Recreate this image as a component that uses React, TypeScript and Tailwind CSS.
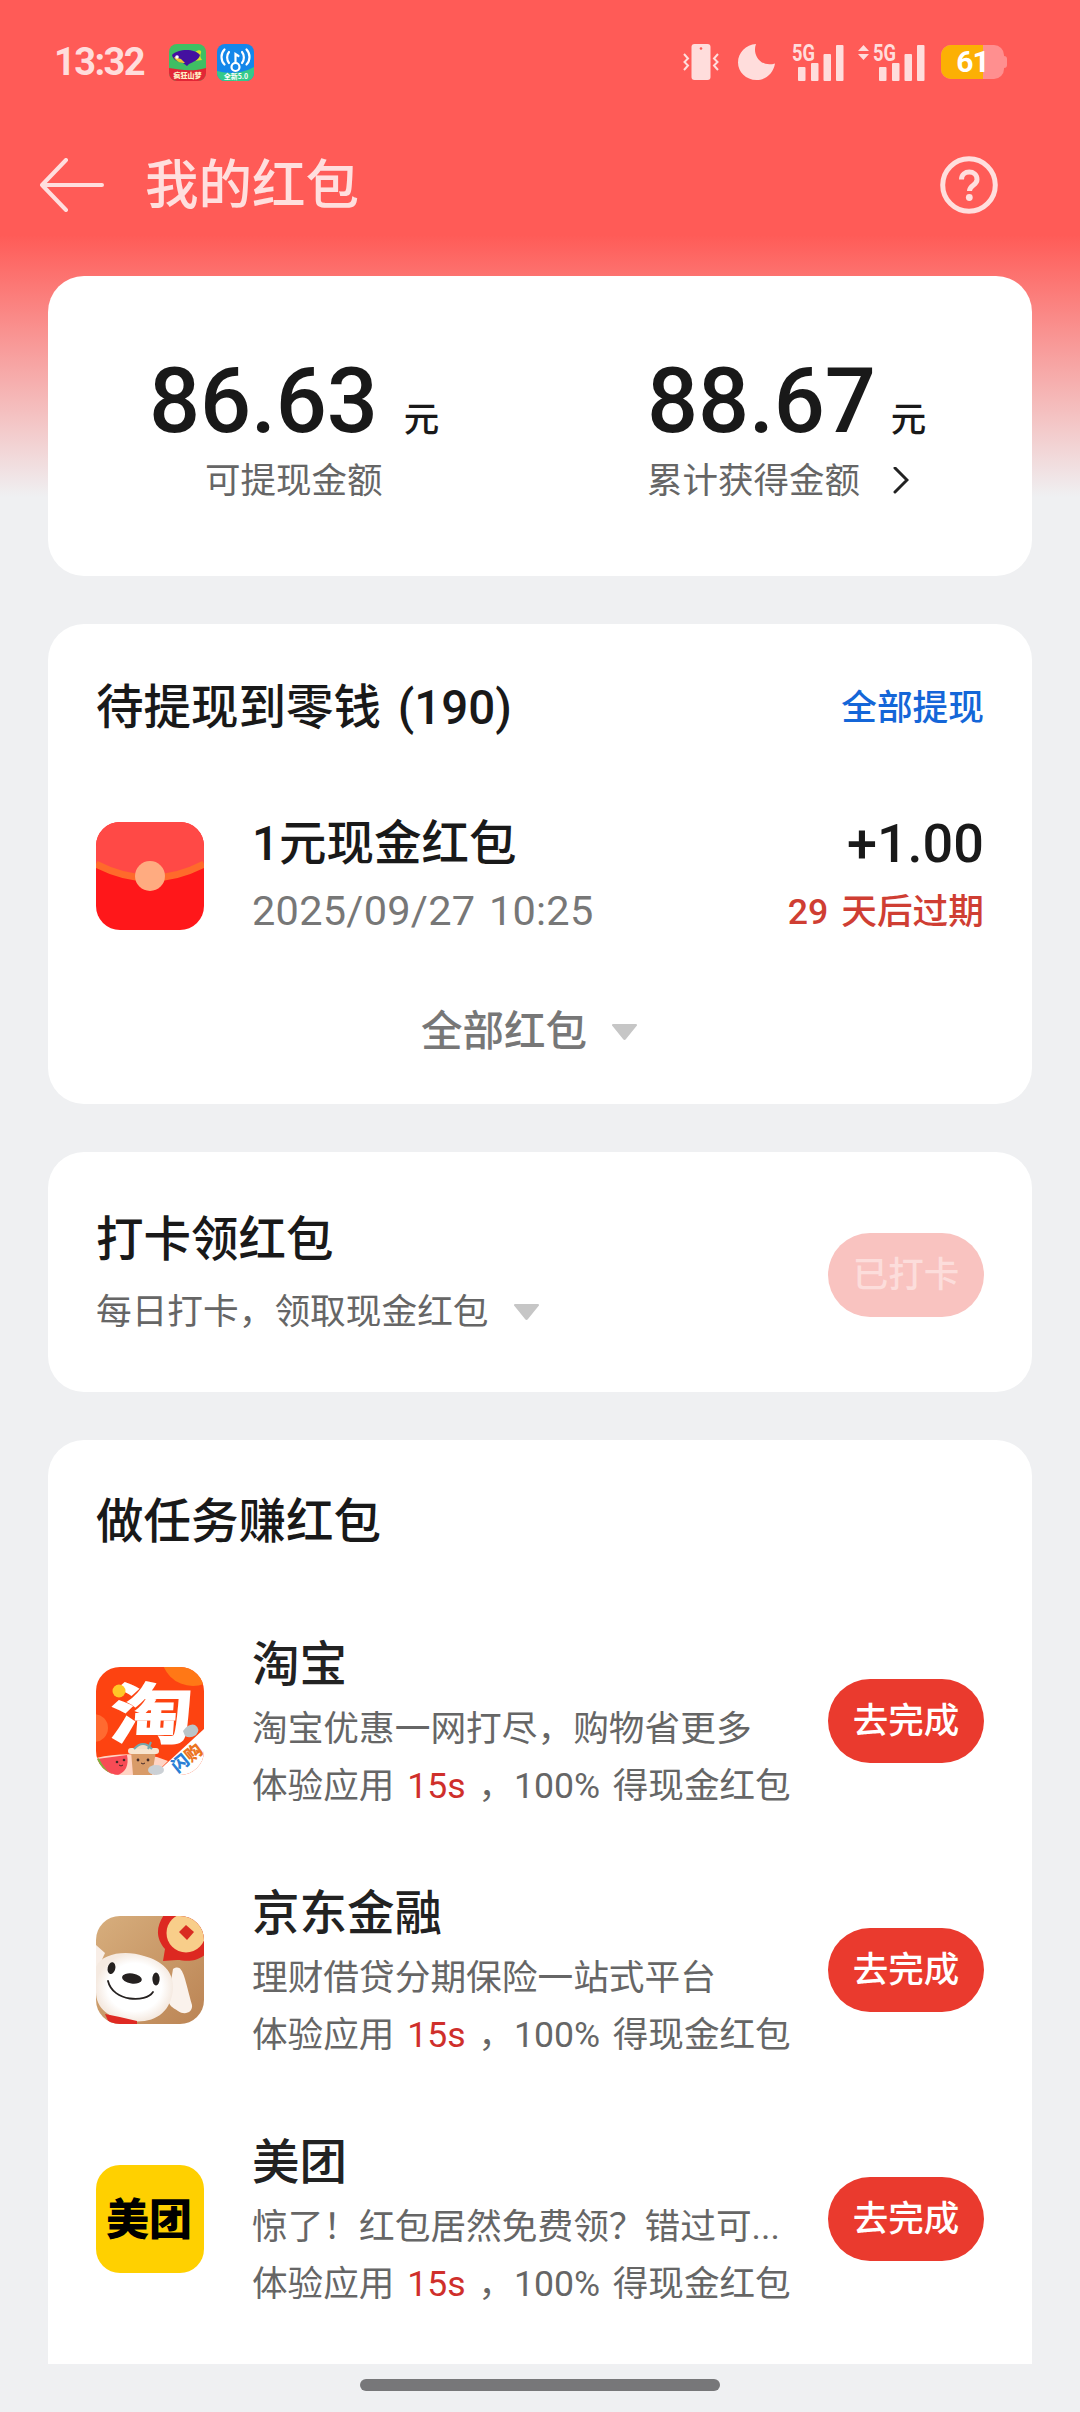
import React from "react";

const TEXT_FONT = "font-[Roboto,'Noto_Sans_CJK_SC',sans-serif]";

const tasks = [
  { name: "淘宝", desc: "淘宝优惠一网打尽，购物省更多", icon: <TaobaoIcon /> },
  { name: "京东金融", desc: "理财借贷分期保险一站式平台", icon: <JdIcon /> },
  { name: "美团", desc: "惊了！红包居然免费领？错过可...", icon: <MeituanIcon /> },
];

function Signal() {
  return (
    <svg className="h-[38px] w-[52px] overflow-visible" viewBox="0 0 52 38" fill="#ffdddc">
      <text x="0" y="17.500" fontSize="23" fontWeight="700" fontFamily="Roboto" textLength="23" lengthAdjust="spacingAndGlyphs">5G</text>
      <rect x="6" y="24" width="7.5" height="14" rx="1" />
      <rect x="19" y="20" width="7.5" height="18" rx="1" />
      <rect x="31.5" y="11" width="7.5" height="27" rx="1" />
      <rect x="44" y="2" width="7.5" height="36" rx="1" />
    </svg>
  );
}

function StatusBar() {
  return (
    <div className="flex h-[124px] items-center pl-[54px] pr-[73px]">
      <span className="w-[90px] text-[38px] leading-none font-bold tracking-[-1.6px] text-[#ffdddc]">13:32</span>
      <svg className="ml-[25px] size-[37px]" viewBox="0 0 37 37">
        <clipPath id="appA"><rect width="37" height="37" rx="8" /></clipPath>
        <g clipPath="url(#appA)">
          <rect width="37" height="37" fill="#3fbf63" />
          <path d="M26 8c4-3 7-2 6 1-1 2-1 4 1 7l-8 1z" fill="#d8df2c" />
          <path d="M3 11C9 5 25 4 31 11c-1 5-7 7-11 9l-2 2-4-3C9 18 4 16 3 11z" fill="#4410a0" />
          <path d="M5 13c2 5 7 6 11 6l-4-4z" fill="#e9c92e" />
          <circle cx="8" cy="13" r="1.8" fill="#fff" />
          <path d="M0 24c12 2 24 4 37 0v13H0z" fill="#e32636" />
          <text x="18.500" y="34" fontSize="7" fontWeight="900" fill="#fff3c8" textAnchor="middle" fontFamily="Noto Sans CJK SC">疯狂山梦</text>
        </g>
      </svg>
      <svg className="ml-[11px] size-[37px]" viewBox="0 0 37 37">
        <clipPath id="appB"><rect width="37" height="37" rx="8" /></clipPath>
        <g clipPath="url(#appB)">
          <rect width="37" height="37" fill="#1487ea" />
          <path d="M0 27c12 3 25 3 37-4v14H0z" fill="#35c98a" />
          <g fill="none" stroke="#fff" strokeWidth="2.200" strokeLinecap="round">
            <circle cx="18.500" cy="23" r="4" />
            <path d="M18.500 19V10l3 2M12 8c-2.500 3-2.500 8 0 11M7.500 5.500c-4 4-4 11 0 15M25 8c2.500 3 2.500 8 0 11M29.500 5.500c4 4 4 11 0 15" />
          </g>
          <text x="19" y="34.500" fontSize="7" fontWeight="700" fill="#fff" textAnchor="middle" fontFamily="Noto Sans CJK SC">全新5.0</text>
        </g>
      </svg>
      <div className="ml-auto flex items-center">
        <svg className="h-9 w-9" viewBox="0 0 36 36" fill="#ffdddc">
          <rect x="8.500" width="19" height="36" rx="3" />
          <circle cx="18" cy="4.500" r="1.300" fill="#ff5b57" />
          <path d="M1 10l4 4.500-3.500 3.500L5 21.500 1 26M35 10l-4 4.500 3.500 3.500-3.500 3.500L35 26" fill="none" stroke="#ffdddc" strokeWidth="2" />
        </svg>
        <svg className="ml-[19px] h-9 w-[37px]" viewBox="0 0 37 36" fill="#ffdddc">
          <path d="M18 0C14 10 22 24 37 19.500C35.500 29 28 36 18.500 36C8 36 0 28 0 18.500C0 8.500 8 .5 18 0Z" />
        </svg>
        <span className="ml-[17px]"><Signal /></span>
        <svg className="mb-5 ml-[14px] h-[15px] w-[11px]" viewBox="0 0 11 15" fill="#ffdddc">
          <path d="M5.500 0L11 6H0zM5.500 15L0 9h11z" />
        </svg>
        <span className="ml-1"><Signal /></span>
        <div className="relative ml-4 flex h-[34px] w-[63px] items-center justify-center overflow-hidden rounded-[10px] bg-[#ff8f8f]">
          <div className="absolute inset-y-0 left-0 w-[42px] bg-[#fcb004]" />
          <span className="relative text-[30px] leading-none font-bold tracking-[-1px] text-white">61</span>
        </div>
        <div className="h-3 w-[3px] rounded-r bg-[#ff8f8f]" />
      </div>
    </div>
  );
}

function Header() {
  return (
    <div className="flex h-[121px] items-center pl-10 pr-[82px]">
      <svg className="h-[54px] w-16" viewBox="0 0 64 54" fill="none" stroke="#ffdfde" strokeWidth="4" strokeLinecap="round" strokeLinejoin="round">
        <path d="M26 2L2 27l24 25M2 27h60" />
      </svg>
      <h1 className="ml-[41px] pt-0.5 text-[53.5px] leading-[60px] font-medium text-[#ffdfde]">我的红包</h1>
      <svg className="ml-auto size-[58px]" viewBox="0 0 58 58" fill="none" stroke="#ffdfde" strokeWidth="5">
        <circle cx="29" cy="29" r="26.300" />
        <path d="M21.500 23.500c0-10 15.500-10 15.500 0 0 6-7.500 5.500-7.500 11.500" />
        <circle cx="29.300" cy="41.500" r="3.400" fill="#ffdfde" stroke="none" />
      </svg>
    </div>
  );
}

function Down() {
  return (
    <svg className="h-4 w-[25px]" viewBox="0 0 25 16" fill="#c6c6c6">
      <path d="M1.500 0h22c1.500 0 2 1 1 2L14 15c-1 1.300-2 1.300-3 0L.5 2C-.5 1 0 0 1.500 0z" />
    </svg>
  );
}

function EnvelopeIcon() {
  return (
    <svg className="size-[108px]" viewBox="0 0 108 108">
      <clipPath id="env"><rect width="108" height="108" rx="24" /></clipPath>
      <g clipPath="url(#env)">
        <rect width="108" height="108" fill="#ff171a" />
        <path d="M0 0h108v42Q54 72 0 42z" fill="#ff4946" />
        <path d="M0 42Q54 70 108 42" fill="none" stroke="#ff6a2b" strokeWidth="7" />
        <circle cx="54" cy="54" r="15" fill="#ffab80" />
      </g>
    </svg>
  );
}

function TaobaoIcon() {
  return (
    <svg className="size-[108px]" viewBox="0 0 108 108">
      <clipPath id="tb"><rect width="108" height="108" rx="24" /></clipPath>
      <g clipPath="url(#tb)">
        <rect width="108" height="108" fill="#fd4311" />
        <circle cx="97" cy="-13" r="32" fill="#ff7816" />
        <circle cx="-2" cy="61" r="14" fill="#ff6a30" />
        <text fontSize="66" fontWeight="700" fill="#fff" stroke="#fff" strokeWidth="1.500" textAnchor="middle" fontFamily="Noto Sans CJK SC" transform="translate(54 71) skewX(-4) scale(1.25 1)">淘</text>
        <circle cx="23" cy="24" r="6.500" fill="#ffc727" />
        <path d="M108 62L58 108h50z" fill="#fff" />
        <path d="M0 91Q30 84 61 90L72 94 58 108H0z" fill="#ffd4c4" />
        <path d="M1 92L31 88Q34 103 22 108H8z" fill="#f84b55" />
        <path d="M1 92Q7 105 17 110" fill="none" stroke="#79b83e" strokeWidth="4" />
        <path d="M35 84h25l-4 24H37z" fill="#d99b68" />
        <rect x="32" y="81" width="31" height="6" rx="3" fill="#f8e5d0" />
        <path d="M38 82q9-10 18 0M52 82l3-7" fill="#f5ddc7" stroke="#75a7ae" strokeWidth="2" />
        <g fill="#432a28">
          <circle cx="42" cy="93" r="1.400" /><circle cx="52" cy="93" r="1.400" />
          <circle cx="21" cy="95" r="1.300" /><circle cx="28" cy="93" r="1.300" />
        </g>
        <path d="M45 96q2 2 4 0M23 98q2 2 4 0" fill="none" stroke="#432a28" />
        <path d="M87 64q6-8 12-6 6 4 1 10-6 4-11 1z" fill="#bac5c9" />
        <ellipse cx="60" cy="103" rx="8" ry="5" fill="#cbd0d5" />
        <text x="91" y="97" fontSize="17" fontWeight="900" fill="#ec7422" textAnchor="middle" fontFamily="Noto Sans CJK SC" transform="rotate(-39 91 91)">
          <tspan fill="#2a7fd5">闪</tspan>购
        </text>
      </g>
    </svg>
  );
}

function JdIcon() {
  return (
    <svg className="size-[108px]" viewBox="0 0 108 108">
      <defs>
        <clipPath id="jd"><rect width="108" height="108" rx="24" /></clipPath>
        <linearGradient id="jdBg" x1="0" y1="0" x2="1" y2="1">
          <stop stopColor="#d7ae7d" />
          <stop offset="1" stopColor="#bb8454" />
        </linearGradient>
        <radialGradient id="jdFace">
          <stop offset=".7" stopColor="#fff" />
          <stop offset="1" stopColor="#f5eae1" />
        </radialGradient>
      </defs>
      <g clipPath="url(#jd)">
        <rect width="108" height="108" fill="url(#jdBg)" />
        <path d="M67 45l2-12C58 20 61 8 70-4h40v42C98 48 88 44 81 44z" fill="#dd2821" />
        <circle cx="90" cy="17" r="19.500" fill="#f8ce8a" />
        <path d="M90 9l8 7-7 8-8-8z" fill="#d92b22" />
        <path d="M0 29l9 8-9 20z" fill="#f8eee7" />
        <path d="M77 53c10-6 11 7 19 36 1 7-7 11-14 6-6-4-9-5-10-12z" fill="#faf2ec" />
        <path d="M0 51C6 37 30 34 48 40c18 5 30 15 29 33C75 97 58 108 34 105 13 103 0 92 0 76z" fill="url(#jdFace)" />
        <ellipse cx="15.500" cy="52" rx="3.800" ry="6" fill="#252120" transform="rotate(12 15 52)" />
        <ellipse cx="60" cy="63" rx="3.600" ry="6.500" fill="#252120" />
        <ellipse cx="36" cy="62.500" rx="10" ry="5" fill="#252120" transform="rotate(8 36 62)" />
        <path d="M12 65c5 21 38 22 45 11" fill="none" stroke="#252120" strokeWidth="1.800" strokeLinecap="round" />
        <path d="M9 98q16 3 32 7v4H14z" fill="#df2922" />
      </g>
    </svg>
  );
}

function MeituanIcon() {
  return (
    <div className="flex size-[108px] items-center justify-center rounded-3xl bg-[#ffd000] pb-[5px] pr-0.5">
      <span className="font-['Noto_Sans_CJK_SC',sans-serif] text-[43px] leading-[64px] font-black text-black">美团</span>
    </div>
  );
}

function Balance() {
  return (
    <section className="flex h-[300px] rounded-[36px] bg-white pt-[78px] text-[#191919]">
      <div className="w-[492px] pl-[101px]">
        <div className="flex items-baseline font-medium">
          <span className="text-[90px] leading-[96px] tracking-[-0.2px]">86.63</span>
          <span className="ml-[26px] text-[35.5px] leading-[48px]">元</span>
        </div>
        <p className="mt-[11px] pl-[56px] text-[35.500px] leading-[40px] text-[#666]">可提现金额</p>
      </div>
      <div className="pl-[107px]">
        <div className="flex items-baseline font-medium">
          <span className="text-[90px] leading-[96px] tracking-[-0.2px]">88.67</span>
          <span className="ml-[15px] text-[35.5px] leading-[48px]">元</span>
        </div>
        <div className="mt-[11px] flex items-center">
          <p className="text-[35.5px] leading-[40px] text-[#666]">累计获得金额</p>
          <svg className="ml-[33px] h-7 w-4" viewBox="0 0 16 28" fill="none" stroke="#222" strokeWidth="3" strokeLinecap="round">
            <path d="M2 1l12 12L2 25" />
          </svg>
        </div>
      </div>
    </section>
  );
}

function Pending() {
  return (
    <section className="mt-12 h-[480px] rounded-[36px] bg-white px-12 pt-[56px]">
      <div className="flex items-center justify-between">
        <h2 className="text-[47.5px] leading-[56px] font-medium [word-spacing:5px] text-[#191919]">待提现到零钱 (190)</h2>
        <span className="text-[35.7px] leading-[40px] font-medium text-[#1466d8]">全部提现</span>
      </div>
      <div className="mt-[80px] flex items-center">
        <EnvelopeIcon />
        <div className="ml-12">
          <p className="text-[47.5px] leading-[56px] font-medium text-[#191919]">1元现金红包</p>
          <p className="mt-[15px] mb-px text-[41.500px] leading-[48px] tracking-[0.25px] [word-spacing:3px] text-[#777]">2025/09/27 10:25</p>
        </div>
        <div className="ml-auto text-right">
          <p className="text-[54px] leading-[56px] font-medium text-[#191919]">+1.00</p>
          <p className="mt-4 text-[35.7px] leading-[48px] font-medium [word-spacing:4px] text-[#cf3e33]">29 天后过期</p>
        </div>
      </div>
      <div className="mt-[72px] flex items-center pl-[325px]">
        <span className="text-[41.500px] leading-[48px] font-medium text-[#777]">全部红包</span>
        <span className="ml-[25px]"><Down /></span>
      </div>
    </section>
  );
}

function CheckIn() {
  return (
    <section className="mt-12 flex h-60 items-center justify-between rounded-[36px] bg-white px-12">
      <div className="pt-0.5">
        <h2 className="text-[47.5px] leading-[56px] font-medium text-[#191919]">打卡领红包</h2>
        <div className="mt-[22px] flex items-center">
          <p className="text-[35.7px] leading-[44px] text-[#666]">每日打卡，领取现金红包</p>
          <span className="mb-px ml-[25px]"><Down /></span>
        </div>
      </div>
      <button className="mt-1.5 h-[84px] w-[156px] rounded-full bg-[#f9c3c0] pt-0.5 text-[35.5px] font-medium text-[#fcdddb]">已打卡</button>
    </section>
  );
}

function Tasks() {
  return (
    <section className="mt-12 h-[924px] rounded-t-[36px] bg-white px-12 pt-[54px]">
      <h2 className="text-[47.5px] leading-[56px] font-medium text-[#191919]">做任务赚红包</h2>
      <div className="mt-[46px]">
        {tasks.map((task) => (
          <div key={task.name} className="flex h-[249px] items-center">
            {task.icon}
            <div className="ml-12 w-[576px] pt-[10px] text-[35.7px] whitespace-nowrap text-[#666]">
              <h3 className="text-[47.5px] leading-[56px] font-medium text-[#222]">{task.name}</h3>
              <p className="mt-2 leading-[57px]">{task.desc}</p>
              <p className="text-[35.6px] leading-[57px] [word-spacing:4px]">
                体验应用 <span className="text-[#cf2f2b]">15s</span> ，100% 得现金红包
              </p>
            </div>
            <button className="h-[84px] w-[156px] rounded-full bg-[#ea3a2e] pt-0.5 text-[35.5px] font-medium text-white">去完成</button>
          </div>
        ))}
      </div>
    </section>
  );
}

export default function App() {
  return (
    <div className={`${TEXT_FONT} h-[2412px] w-[1080px] overflow-hidden bg-[#eff0f2] bg-[linear-gradient(#ff5b57_0px,#ff5b57_235px,#eff0f2_497px)]`}>
      <StatusBar />
      <Header />
      <main className="px-12 pt-[31px]">
        <Balance />
        <Pending />
        <CheckIn />
        <Tasks />
      </main>
      <div className="flex h-12 items-center justify-center pb-1.5">
        <div className="h-3 w-[360px] rounded-full bg-[#777779]" />
      </div>
    </div>
  );
}
